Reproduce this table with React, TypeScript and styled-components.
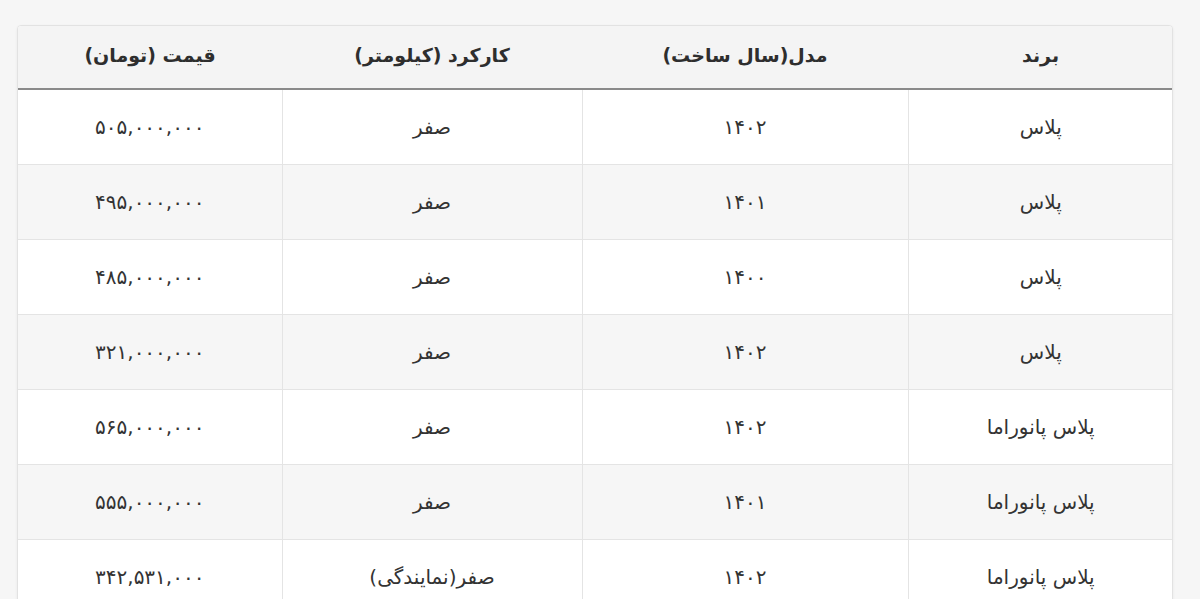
import React from "react";
import styled, { createGlobalStyle } from "styled-components";

const GlobalStyle = createGlobalStyle`
  html, body {
    margin: 0;
    background: #f6f6f6;
  }
  body {
    font-family: "DejaVu Sans", "Noto Sans", sans-serif;
  }
`;

const Page = styled.div`
  padding: 25px 27px 0 17px;
`;

const Card = styled.div`
  background: #fff;
  border: 1px solid #e2e2e2;
  border-radius: 4px;
  box-shadow: 0 1px 3px rgba(0, 0, 0, 0.06);
  overflow: hidden;
`;

const Table = styled.table`
  width: 100%;
  direction: rtl;
  border-collapse: collapse;
  table-layout: fixed;
  color: #333;
`;

const HeadCell = styled.th`
  height: 63px;
  background: #f4f4f4;
  border-bottom: 2px solid #8a8a8a;
  font-size: 19px;
  font-weight: 700;
  color: #2e2e2e;
  text-align: center;
  vertical-align: middle;
  padding: 0 10px 4px;
  box-sizing: border-box;
`;

const Row = styled.tr<{ $shaded: boolean }>`
  background: ${(p) => (p.$shaded ? "#f6f6f6" : "#fff")};
`;

const Cell = styled.td`
  height: 74px;
  border-bottom: 1px solid #e4e4e4;
  border-left: 1px solid #e4e4e4;
  font-size: 20px;
  text-align: center;
  vertical-align: middle;
  padding: 0 10px;
  &:last-child {
    border-left: none;
  }
`;

const rows = [
  ["پلاس", "۱۴۰۲", "صفر", "۵۰۵,۰۰۰,۰۰۰"],
  ["پلاس", "۱۴۰۱", "صفر", "۴۹۵,۰۰۰,۰۰۰"],
  ["پلاس", "۱۴۰۰", "صفر", "۴۸۵,۰۰۰,۰۰۰"],
  ["پلاس", "۱۴۰۲", "صفر", "۳۲۱,۰۰۰,۰۰۰"],
  ["پلاس پانوراما", "۱۴۰۲", "صفر", "۵۶۵,۰۰۰,۰۰۰"],
  ["پلاس پانوراما", "۱۴۰۱", "صفر", "۵۵۵,۰۰۰,۰۰۰"],
  ["پلاس پانوراما", "۱۴۰۲", "صفر(نمایندگی)", "۳۴۲,۵۳۱,۰۰۰"],
];

export default function App() {
  return (
    <Page>
      <GlobalStyle />
      <Card>
        <Table>
          <colgroup>
            <col style={{ width: 265 }} />
            <col style={{ width: 326 }} />
            <col style={{ width: 300 }} />
            <col style={{ width: 264 }} />
          </colgroup>
          <thead>
            <tr>
              <HeadCell>برند</HeadCell>
              <HeadCell>مدل(سال ساخت)</HeadCell>
              <HeadCell>کارکرد (کیلومتر)</HeadCell>
              <HeadCell>قیمت (تومان)</HeadCell>
            </tr>
          </thead>
          <tbody>
            {rows.map((r, i) => (
              <Row key={i} $shaded={i % 2 === 1}>
                {r.map((c, j) => (
                  <Cell key={j}>{c}</Cell>
                ))}
              </Row>
            ))}
          </tbody>
        </Table>
      </Card>
    </Page>
  );
}
